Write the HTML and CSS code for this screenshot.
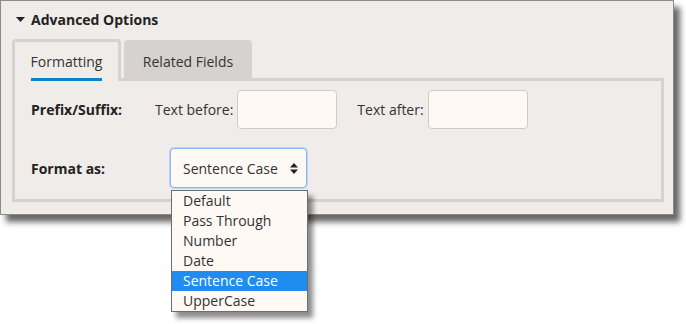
FILE: index.html
```html
<!DOCTYPE html>
<html lang="en">
<head>
    <meta charset="UTF-8">
    <title>Advanced Options</title>
    <link rel="stylesheet" href="styles.css">
</head>
<body>

<div class="panel">
    <div class="panel-head">
        <svg class="caret" width="9" height="5" viewBox="0 0 9 5"><path d="M0 0h9L4.5 5z" fill="#222"/></svg>
        Advanced Options
    </div>

    <div class="tabs">
        <div class="tab active"><span>Formatting</span></div>
        <div class="tab">Related Fields</div>
    </div>

    <div class="tab-body">
        <div class="row">
            <div class="label label-prefix">Prefix/Suffix:</div>
            <span class="small-label">Text before:</span>
            <div class="text-box"></div>
            <span class="small-label after">Text after:</span>
            <div class="text-box"></div>
        </div>
        <div class="row row-format">
            <div class="label label-format">Format as:</div>
            <div class="select-wrap">
                <div class="select">
                    Sentence Case
                    <svg width="8" height="11" viewBox="0 0 8 11"><path d="M0 4.5L4 0l4 4.5zM0 6.5h8L4 11z" fill="#222"/></svg>
                </div>
                <ul class="options">
                    <li>Default</li>
                    <li>Pass Through</li>
                    <li>Number</li>
                    <li>Date</li>
                    <li class="selected">Sentence Case</li>
                    <li>UpperCase</li>
                </ul>
            </div>
        </div>
    </div>
</div>

</body>
</html>
```

FILE: styles.css
```css
body {
    margin: 0;
    min-height: 324px;
    background-color: #fff;
    font-family: "Open Sans", sans-serif;
    font-size: 14px;
    color: #333;
}

.panel {
    width: 672px;
    height: 213px;
    background-color: #f0ecea;
    border: 1px solid #8e8c8b;
    box-shadow: 6px 7px 6px rgba(0, 0, 0, 0.6);
}

.panel-head {
    display: flex;
    align-items: center;
    height: 36px;
    padding-left: 15px;
    font-weight: bold;
    color: #222;
}

.caret {
    margin-right: 6px;
}

.tabs {
    display: flex;
    align-items: flex-end;
    margin-left: 11px;
    margin-top: 2px;
    position: relative;
    z-index: 1;
}

.tab {
    box-sizing: border-box;
    height: 38px;
    width: 128px;
    margin-left: 3px;
    padding-top: 12px;
    text-align: center;
    background-color: #d6d2cf;
    border-radius: 4px 4px 0 0;
}

.tab.active {
    width: 109px;
    height: 42px;
    margin-left: 0;
    margin-bottom: -3px;
    padding-top: 10px;
    background-color: #f0ecea;
    border: 3px solid #d6d2cf;
    border-bottom: none;
}

.tab.active span {
    display: inline-block;
    padding-bottom: 7px;
    border-bottom: 3px solid #0a84c8;
}

.tab-body {
    box-sizing: border-box;
    height: 124px;
    margin: 0 9px 0 11px;
    padding: 9px 0 0 16px;
    border: 3px solid #d6d2cf;
}

.row {
    display: flex;
    align-items: center;
}

.label {
    font-weight: bold;
    color: #222;
}

.label-prefix {
    width: 124px;
}

.label-format {
    width: 139px;
}

.small-label {
    margin-right: 4px;
}

.small-label.after {
    margin-left: 20px;
}

.text-box {
    width: 98px;
    height: 37px;
    background-color: #fff9f6;
    border: 1px solid #cfcbc9;
    border-radius: 4px;
}

.row-format {
    margin-top: 19px;
}

.select-wrap {
    position: relative;
}

.select {
    box-sizing: border-box;
    width: 137px;
    height: 40px;
    display: flex;
    align-items: center;
    justify-content: space-between;
    padding: 0 8px 0 12px;
    background-color: #fff9f6;
    border: 1px solid #8cb9ec;
    border-radius: 4px;
    box-shadow: 0 0 0 1px #b9d5f3;
}

.options {
    position: absolute;
    left: 1px;
    top: 42px;
    width: 135px;
    margin: 0;
    padding: 0;
    list-style: none;
    background-color: #fff9f6;
    border: 1px solid #6f6d6c;
    box-shadow: 5px 6px 5px rgba(0, 0, 0, 0.45);
    z-index: 2;
}

.options li {
    height: 20px;
    line-height: 20px;
    padding-left: 11px;
}

.options li.selected {
    background-color: #1e8cf0;
    color: #fff;
}
```
